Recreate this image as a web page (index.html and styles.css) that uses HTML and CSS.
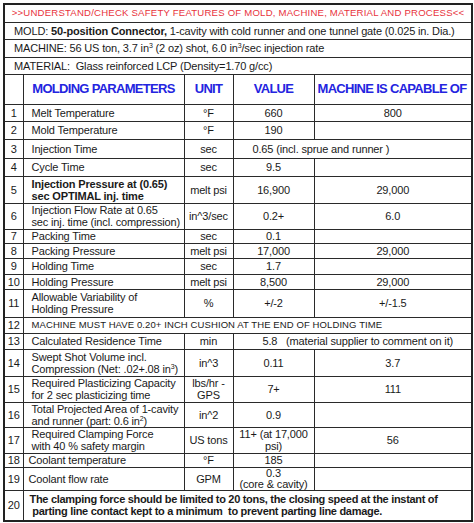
FILE: index.html
```html
<!DOCTYPE html>
<html>
<head>
<meta charset="utf-8">
<link rel="stylesheet" href="styles.css">
</head>
<body>
<table class="sheet">
  <colgroup>
    <col class="c-num"><col class="c-param"><col class="c-unit"><col class="c-val"><col class="c-mach">
  </colgroup>
  <tr class="h18"><td colspan="5" class="title">&gt;&gt;UNDERSTAND/CHECK SAFETY FEATURES OF MOLD, MACHINE, MATERIAL AND PROCESS&lt;&lt;</td></tr>
  <tr class="h17"><td colspan="5" class="info">MOLD: <b>50-position Connector,</b> 1-cavity with cold runner and one tunnel gate (0.025 in. Dia.)</td></tr>
  <tr class="h18"><td colspan="5" class="info">MACHINE: 56 US ton, 3.7 in<sup>3</sup> (2 oz) shot, 6.0 in<sup>3</sup>/sec injection rate</td></tr>
  <tr class="h17"><td colspan="5" class="info">MATERIAL:&nbsp; Glass reinforced LCP (Density=1.70 g/cc)</td></tr>
  <tr class="h30 head">
    <td></td><td class="ctr">MOLDING PARAMETERS</td><td class="ctr">UNIT</td><td class="ctr">VALUE</td><td class="lft">MACHINE IS CAPABLE OF</td>
  </tr>
  <tr class="h17"><td class="n">1</td><td class="p">Melt Temperature</td><td class="u">°F</td><td class="v">660</td><td class="v">800</td></tr>
  <tr class="h18"><td class="n">2</td><td class="p">Mold Temperature</td><td class="u">°F</td><td class="v">190</td><td class="v"></td></tr>
  <tr class="h19"><td class="n">3</td><td class="p">Injection Time</td><td class="u">sec</td><td colspan="2" class="span3">0.65 (incl. sprue and runner )</td></tr>
  <tr class="h18"><td class="n">4</td><td class="p">Cycle Time</td><td class="u">sec</td><td class="v">9.5</td><td class="v"></td></tr>
  <tr class="h27"><td class="n">5</td><td class="p bold">Injection Pressure at (0.65)<br>sec OPTIMAL inj. time</td><td class="u">melt psi</td><td class="v">16,900</td><td class="v">29,000</td></tr>
  <tr class="h26"><td class="n">6</td><td class="p">Injection Flow Rate at 0.65<br>sec inj. time (incl. compression)</td><td class="u">in^3/sec</td><td class="v">0.2+</td><td class="v">6.0</td></tr>
  <tr class="h14"><td class="n">7</td><td class="p">Packing Time</td><td class="u">sec</td><td class="v">0.1</td><td class="v"></td></tr>
  <tr class="h15"><td class="n">8</td><td class="p">Packing Pressure</td><td class="u">melt psi</td><td class="v">17,000</td><td class="v">29,000</td></tr>
  <tr class="h16"><td class="n">9</td><td class="p">Holding Time</td><td class="u">sec</td><td class="v">1.7</td><td class="v"></td></tr>
  <tr class="h15"><td class="n">10</td><td class="p">Holding Pressure</td><td class="u">melt psi</td><td class="v">8,500</td><td class="v">29,000</td></tr>
  <tr class="h28"><td class="n">11</td><td class="p">Allowable Variability of<br>Holding Pressure</td><td class="u">%</td><td class="v">+/-2</td><td class="v">+/-1.5</td></tr>
  <tr class="h16"><td class="n">12</td><td colspan="4" class="note">MACHINE MUST HAVE 0.20+ INCH CUSHION AT THE END OF HOLDING TIME</td></tr>
  <tr class="h16"><td class="n">13</td><td class="p">Calculated Residence Time</td><td class="u">min</td><td colspan="2" class="span13">5.8&nbsp;&nbsp; (material supplier to comment on it)</td></tr>
  <tr class="h27"><td class="n">14</td><td class="p">Swept Shot Volume incl.<br>Compression (Net: .02+.08 in<sup>3</sup>)</td><td class="u">in^3</td><td class="v">0.11</td><td class="v">3.7</td></tr>
  <tr class="h26"><td class="n">15</td><td class="p">Required Plasticizing Capacity<br>for 2 sec plasticizing time</td><td class="u">lbs/hr -<br>GPS</td><td class="v">7+</td><td class="v">111</td></tr>
  <tr class="h24"><td class="n">16</td><td class="p">Total Projected Area of 1-cavity<br>and runner (part: 0.6 in<sup>2</sup>)</td><td class="u">in^2</td><td class="v">0.9</td><td class="v"></td></tr>
  <tr class="h26"><td class="n">17</td><td class="p">Required Clamping Force<br>with 40 % safety margin</td><td class="u">US tons</td><td class="v">11+ (at 17,000<br>psi)</td><td class="v">56</td></tr>
  <tr class="h14"><td class="n">18</td><td class="p tight">Coolant temperature</td><td class="u">°F</td><td class="v">185</td><td class="v"></td></tr>
  <tr class="h22"><td class="n">19</td><td class="p tight">Coolant flow rate</td><td class="u">GPM</td><td class="v small-lh">0.3<br>(core &amp; cavity)</td><td class="v"></td></tr>
  <tr class="h32"><td class="n">20</td><td colspan="4" class="final">The clamping force should be limited to 20 tons, the closing speed at the instant of<br>&nbsp;parting line contact kept to a minimum&nbsp; to prevent parting line damage.</td></tr>
</table>
</body>
</html>
```
FILE: styles.css
```css
html, body {
  margin: 0;
  padding: 0;
  background: #ffffff;
}

body {
  font-family: "Liberation Sans", Arial, sans-serif;
  font-size: 11px;
  color: #1a1a1a;
}

.sheet {
  margin: 3px 0 0 3px;
  width: 468px;
  table-layout: fixed;
  border-collapse: collapse;
  border: 2px solid #222;
  letter-spacing: -0.15px;
}

.c-num { width: 19px; }
.c-param { width: 161px; }
.c-unit { width: 49px; }
.c-val { width: 81px; }
.c-mach { width: 158px; }

.sheet td {
  border: 1px solid #2a2a2a;
  padding: 0;
  line-height: 12px;
  vertical-align: middle;
  overflow: hidden;
  white-space: nowrap;
}

.h14 { height: 14px; }
.h15 { height: 15px; }
.h16 { height: 16px; }
.h17 { height: 17px; }
.h18 { height: 18px; }
.h19 { height: 19px; }
.h22 { height: 22px; }
.h24 { height: 24px; }
.h26 { height: 26px; }
.h27 { height: 27px; }
.h28 { height: 28px; }
.h30 { height: 30px; }
.h32 { height: 31px; }

.title {
  color: #e8323c;
  font-size: 9.6px;
  letter-spacing: 0.2px;
  text-align: center;
}

.info {
  padding-left: 9px !important;
  text-align: left;
}

sup {
  font-size: 7px;
  line-height: 0;
  vertical-align: 4px;
}

.head td {
  color: #2424e0;
  font-weight: bold;
  font-size: 13px;
  letter-spacing: -0.7px;
}

.ctr { text-align: center; }
.lft { text-align: left; padding-left: 3px !important; }

.n { text-align: center; }
.p { text-align: left; padding-left: 8px !important; }
.p.tight { padding-left: 5px !important; }
.bold { font-weight: bold; }
.u { text-align: center; }
.v { text-align: center; }
.small-lh { line-height: 11px !important; }

.span3 { text-align: left; padding-left: 19px !important; }
.span13 { text-align: left; padding-left: 29px !important; }

.note {
  font-size: 9.5px;
  letter-spacing: 0.1px;
  padding-left: 8px !important;
  text-align: left;
}

.final {
  font-weight: bold;
  text-align: left;
  padding-left: 6px !important;
  letter-spacing: -0.3px;
}
```
